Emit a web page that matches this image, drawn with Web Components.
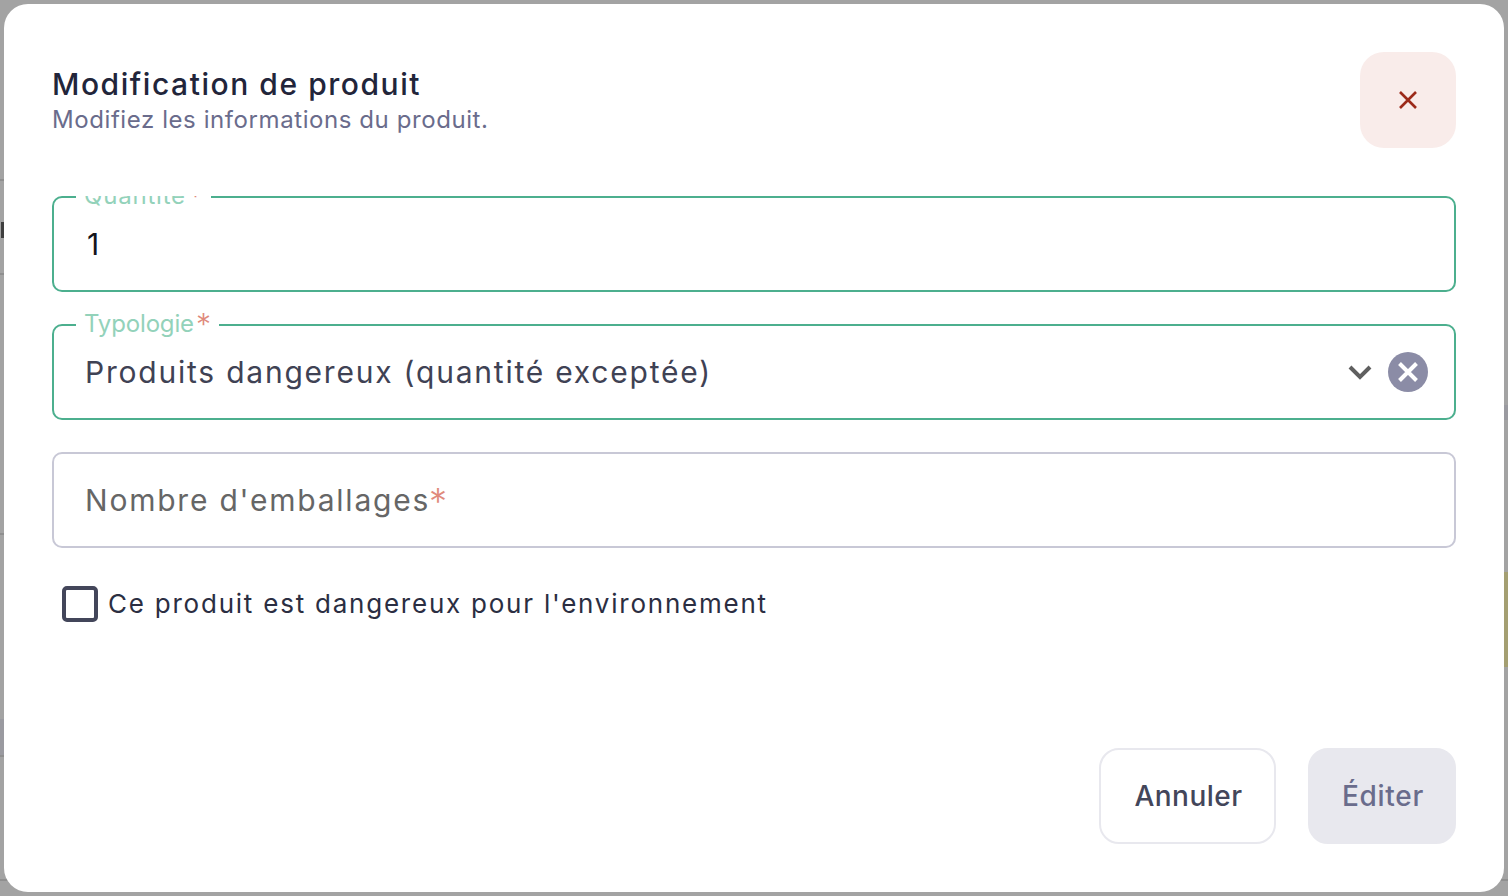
<!DOCTYPE html>
<html lang="fr">
<head>
<meta charset="utf-8">
<title>Modification de produit</title>
<style>
  html, body { margin: 0; height: 100%; }
  body { font-family: Inter, "Noto Sans", sans-serif; overflow: hidden; }
</style>
</head>
<body>
<product-dialog>
  <span slot="title">Modification de produit</span>
  <span slot="subtitle">Modifiez les informations du produit.</span>

  <form-field label="Quantité" state="active" style="--label-spacing:0.8px">
    <span style="color:#14151c;margin-left:2px">1</span>
  </form-field>
  <form-field label="Typologie" state="active" clearable style="--label-spacing:-0.15px">
    <span style="color:#3f4254">Produits dangereux (quantité exceptée)</span>
  </form-field>
  <form-field placeholder="Nombre d'emballages"></form-field>
  <check-row>Ce produit est dangereux pour l'environnement</check-row>

  <app-button slot="actions" style="width:177px">Annuler</app-button>
  <app-button slot="actions" style="width:148px" disabled>Éditer</app-button>
</product-dialog>

<script>
// Modal with the greyed page behind it
class ProductDialog extends HTMLElement {
    constructor() {
        super();
        this.attachShadow({ mode: 'open' });
        this.shadowRoot.innerHTML = `
            <style>
                :host {
                    display: block;
                    box-sizing: border-box;
                    width: 1508px;
                    height: 896px;
                    padding: 4px;
                    background-color: #a3a3a3;
                    background-image:
                        linear-gradient(#8f8f8f, #8f8f8f),
                        linear-gradient(#8f8f8f, #8f8f8f),
                        linear-gradient(#8f8f8f, #8f8f8f),
                        linear-gradient(#8f8f8f, #8f8f8f),
                        linear-gradient(#8f8f8f, #8f8f8f),
                        linear-gradient(#3e3e3e, #3e3e3e),
                        linear-gradient(#9a9aa0, #9a9aa0),
                        linear-gradient(#a49f72, #a49f72),
                        linear-gradient(#9a9aa0, #9a9aa0);
                    background-repeat: no-repeat;
                    background-size: 4px 2px, 4px 2px, 4px 2px, 4px 2px, 100% 2px, 3px 16px, 4px 36px, 4px 95px, 4px 15px;
                    background-position: 0 179px, 0 273px, 0 533px, 0 755px, 0 879px, 1px 222px, 0 719px, 1504px 572px, 1504px 405px;
                }
                .modal {
                    box-sizing: border-box;
                    height: 888px;
                    padding: 48px;
                    background: #fff;
                    border-radius: 24px;
                    display: flex;
                    flex-direction: column;
                }
                header {
                    display: flex;
                    justify-content: space-between;
                    align-items: flex-start;
                    height: 96px;
                }
                h2 {
                    margin: 12px 0 0;
                    font-size: 30px;
                    line-height: 40px;
                    font-weight: 500;
                    color: #22253a;
                    letter-spacing: 1.55px;
                }
                p {
                    margin: 0;
                    font-size: 24px;
                    line-height: 32px;
                    color: #6a6c8c;
                    letter-spacing: 0.58px;
                }
                .close {
                    width: 96px;
                    height: 96px;
                    border-radius: 24px;
                    background: #f9ecea;
                    display: flex;
                    align-items: center;
                    justify-content: center;
                }
                .form {
                    margin-top: 48px;
                    display: flex;
                    flex-direction: column;
                    gap: 32px;
                    overflow: hidden;
                }
                footer {
                    margin-top: auto;
                    display: flex;
                    justify-content: flex-end;
                    gap: 32px;
                }
            </style>
            <div class="modal">
                <header>
                    <div>
                        <h2><slot name="title"></slot></h2>
                        <p><slot name="subtitle"></slot></p>
                    </div>
                    <div class="close">
                        <svg width="24" height="24" viewBox="0 0 24 24" fill="none" stroke="#9c2a1a" stroke-width="2.6">
                            <path d="M4 4 L20 20 M20 4 L4 20"/>
                        </svg>
                    </div>
                </header>
                <div class="form"><slot></slot></div>
                <footer><slot name="actions"></slot></footer>
            </div>
        `;
    }
}

// Outlined field with a floating label cut into its border
class FormField extends HTMLElement {
    constructor() {
        super();
        this.attachShadow({ mode: 'open' });
    }

    connectedCallback() {
        const label = this.getAttribute('label');
        const placeholder = this.getAttribute('placeholder');
        const active = this.getAttribute('state') === 'active';
        this.shadowRoot.innerHTML = `
            <style>
                :host {
                    display: block;
                    position: relative;
                }
                .box {
                    box-sizing: border-box;
                    height: 96px;
                    padding: 0 26px 0 31px;
                    border: 2px solid ${active ? '#4caf8e' : '#c8c8d6'};
                    border-radius: 10px;
                    display: flex;
                    align-items: center;
                    font-size: 30px;
                    letter-spacing: 1.78px;
                }
                .grow { flex: 1; }
                .label {
                    position: absolute;
                    left: 24px;
                    top: -18px;
                    padding: 0 8px;
                    background: #fff;
                    font-size: 24px;
                    line-height: 36px;
                    color: #93d2ba;
                    letter-spacing: var(--label-spacing, 0);
                }
                .star {
                    color: #e08a7c;
                    font-weight: 300;
                    line-height: 0;
                }
                .label .star { font-size: 30px; margin-left: 2px; vertical-align: -3px; letter-spacing: 0; }
                .placeholder { color: #666; }
                .placeholder .star { font-size: 36px; margin-left: -1px; vertical-align: -3px; letter-spacing: 0; }
                .icons { display: flex; align-items: center; gap: 16px; }
            </style>
            ${label ? `<div class="label">${label}<span class="star">*</span></div>` : ''}
            <div class="box">
                <div class="grow">
                    ${placeholder ? `<span class="placeholder">${placeholder}<span class="star">*</span></span>` : '<slot></slot>'}
                </div>
                ${this.hasAttribute('clearable') ? `
                <div class="icons">
                    <svg width="24" height="16" viewBox="0 0 24 16" fill="none" stroke="#5f5f5f" stroke-width="4">
                        <path d="M2 3 L12 13 L22 3"/>
                    </svg>
                    <svg width="40" height="40" viewBox="0 0 40 40">
                        <circle cx="20" cy="20" r="20" fill="#8b8ca6"/>
                        <path d="M11.5 11.5 L28.5 28.5 M28.5 11.5 L11.5 28.5" stroke="#fff" stroke-width="4" fill="none"/>
                    </svg>
                </div>` : ''}
            </div>
        `;
    }
}

class CheckRow extends HTMLElement {
    constructor() {
        super();
        this.attachShadow({ mode: 'open' });
        this.shadowRoot.innerHTML = `
            <style>
                :host {
                    display: flex;
                    align-items: center;
                    gap: 10px;
                    height: 48px;
                    padding-left: 10px;
                    font-size: 26px;
                    line-height: 46px;
                    color: #2b2e42;
                    letter-spacing: 1.77px;
                }
                .box {
                    box-sizing: border-box;
                    width: 36px;
                    height: 36px;
                    border: 4px solid #43465a;
                    border-radius: 5px;
                }
            </style>
            <div class="box"></div>
            <span><slot></slot></span>
        `;
    }
}

class AppButton extends HTMLElement {
    constructor() {
        super();
        this.attachShadow({ mode: 'open' });
        this.shadowRoot.innerHTML = `
            <style>
                :host {
                    box-sizing: border-box;
                    display: flex;
                    align-items: center;
                    justify-content: center;
                    height: 96px;
                    padding-left: 2px;
                    border: 2px solid #e8e8ee;
                    border-radius: 20px;
                    font-size: 28px;
                    font-weight: 500;
                    color: #43465a;
                    letter-spacing: 0.5px;
                }
                :host([disabled]) {
                    background: #e8e8ee;
                    color: #6a6c8c;
                    letter-spacing: 0.7px;
                }
            </style>
            <slot></slot>
        `;
    }
}

customElements.define('product-dialog', ProductDialog);
customElements.define('form-field', FormField);
customElements.define('check-row', CheckRow);
customElements.define('app-button', AppButton);
</script>
</body>
</html>
